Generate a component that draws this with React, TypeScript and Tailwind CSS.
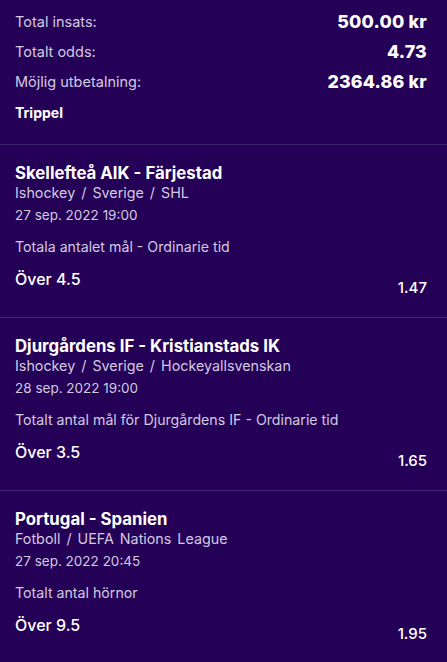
const bets = [
  {
    event: "Skellefteå AIK - Färjestad",
    path: "Ishockey / Sverige / SHL",
    date: "27 sep. 2022 19:00",
    market: "Totala antalet mål - Ordinarie tid",
    pick: "Över 4.5",
    odds: "1.47",
  },
  {
    event: "Djurgårdens IF - Kristianstads IK",
    path: "Ishockey / Sverige / Hockeyallsvenskan",
    date: "28 sep. 2022 19:00",
    market: "Totalt antal mål för Djurgårdens IF - Ordinarie tid",
    pick: "Över 3.5",
    odds: "1.65",
  },
  {
    event: "Portugal - Spanien",
    path: "Fotboll / UEFA Nations League",
    date: "27 sep. 2022 20:45",
    market: "Totalt antal hörnor",
    pick: "Över 9.5",
    odds: "1.95",
  },
]

const summary = [
  { label: "Total insats:", value: "500.00 kr" },
  { label: "Totalt odds:", value: "4.73" },
  { label: "Möjlig utbetalning:", value: "2364.86 kr" },
]

export default function App() {
  return (
    <div
      className="w-[447px] h-[662px] overflow-hidden bg-[#250057] text-white"
      style={{ fontFamily: "Inter, 'Noto Sans', sans-serif" }}
    >
      {/* Summary */}
      <div className="pl-[15px] pr-[20px] pt-[7px] pb-[17px] border-b border-[#3d2870]">
        {summary.map((row) => (
          <div key={row.label} className="h-[30px] flex items-center justify-between">
            <span className="text-[14.5px] text-[#d2cbe0]">{row.label}</span>
            <span className="text-[17.8px] font-extrabold tracking-[0.2px]">{row.value}</span>
          </div>
        ))}
        <div className="h-[30px] flex items-center text-[14px] font-bold">Trippel</div>
      </div>

      {/* Bets */}
      {bets.map((bet) => (
        <div
          key={bet.event}
          className="pl-[15px] pr-[20px] pt-[18px] pb-[19px] border-b border-[#3d2870]"
        >
          <div className="text-[16.8px] leading-[20px] font-bold">{bet.event}</div>
          <div className="text-[14.3px] leading-[20px] text-[#d2cbe0] [word-spacing:2px]">{bet.path}</div>
          <div className="mt-[2px] text-[13.5px] leading-[20px] text-[#d2cbe0]">{bet.date}</div>
          <div className="mt-[12px] text-[14.2px] leading-[20px] text-[#d2cbe0]">{bet.market}</div>
          <div className="mt-[10px] flex justify-between">
            <span className="text-[16px] leading-[24px] font-medium">{bet.pick}</span>
            <span className="mt-[11px] text-[15px] leading-[20px] font-medium">{bet.odds}</span>
          </div>
        </div>
      ))}
    </div>
  )
}
